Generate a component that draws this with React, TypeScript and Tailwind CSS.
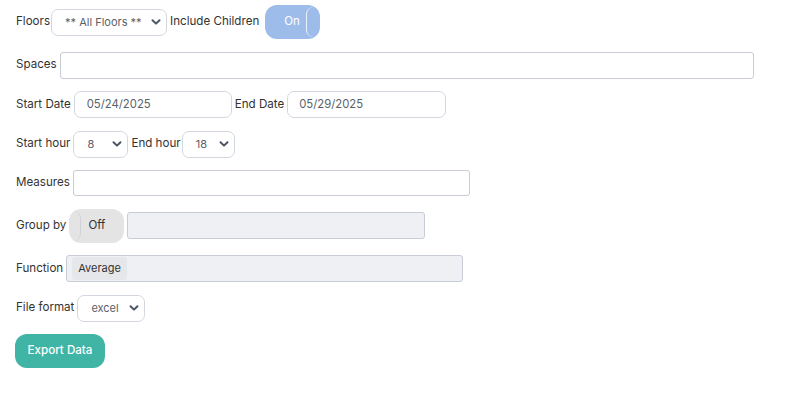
import React from 'react';

const font = { fontFamily: 'Inter, "Open Sans", sans-serif' };

const Chevron: React.FC = () => (
  <svg className="w-[10px] h-[10px] text-gray-600 shrink-0" viewBox="0 0 10 10" fill="none">
    <path d="M1.5 3.2 L5 6.6 L8.5 3.2" stroke="currentColor" strokeWidth="2" strokeLinecap="round" strokeLinejoin="round" />
  </svg>
);

interface SelectProps {
  value: string;
  width: string;
}

const FakeSelect: React.FC<SelectProps> = ({ value, width }) => (
  <div
    className={`${width} h-[27px] flex items-center justify-between pl-[13px] pr-[5px] border border-[#d3d8e0] rounded-[7px] bg-white text-[11px] text-[#5a5f68]`}
  >
    <span className="whitespace-nowrap">{value}</span>
    <Chevron />
  </div>
);

const Toggle: React.FC<{ on: boolean }> = ({ on }) =>
  on ? (
    <div className="relative w-[55px] h-[34px] rounded-[12px] bg-[#9dbce9] flex items-center pl-[19px] text-white text-[11.5px]">
      On
      <span className="absolute right-[4px] top-[2px] w-[10px] h-[30px] rounded-l-[8px] rounded-r-[3px] border-l border-white/80" />
    </div>
  ) : (
    <div className="relative w-[55px] h-[34px] rounded-[12px] bg-[#e4e4e4] flex items-center pl-[19px] text-[#333] text-[11.5px]">
      Off
      <span className="absolute left-[2px] top-[2px] w-[10px] h-[30px] rounded-r-[8px] border-r border-[#cfd3d8]" />
    </div>
  );

const Label: React.FC<{ children: React.ReactNode }> = ({ children }) => (
  <span className="text-[11.6px] text-[#333] whitespace-nowrap">{children}</span>
);

export default function App() {
  return (
    <div style={font} className="w-[787px] h-[398px] bg-white pt-[5px] pl-[16px] flex flex-col gap-[12.5px]">
      <div className="flex items-center gap-[3px]">
        <Label>Floors</Label>
        <div className="ml-[-2px]">
          <FakeSelect value="** All Floors **" width="w-[116px]" />
        </div>
        <Label>Include Children</Label>
        <div className="ml-[3px]">
          <Toggle on={true} />
        </div>
      </div>

      <div className="flex items-center gap-[3px]">
        <Label>Spaces</Label>
        <div className="w-[694px] h-[27px] border border-[#c7ccd6] rounded-[3px] bg-white" />
      </div>

      <div className="flex items-center gap-[3px]">
        <Label>Start Date</Label>
        <div className="w-[158px] h-[27px] border border-[#d3d8e0] rounded-[7px] pl-[12px] flex items-center text-[11.3px] text-[#5a5f68]">
          05/24/2025
        </div>
        <Label>End Date</Label>
        <div className="w-[159px] h-[27px] border border-[#d3d8e0] rounded-[7px] pl-[11px] flex items-center text-[11.3px] text-[#5a5f68]">
          05/29/2025
        </div>
      </div>

      <div className="flex items-center gap-[3px]">
        <Label>Start hour</Label>
        <FakeSelect value="8" width="w-[55px]" />
        <Label>End hour</Label>
        <div className="ml-[-2px]">
          <FakeSelect value="18" width="w-[53px]" />
        </div>
      </div>

      <div className="flex items-center gap-[3px]">
        <Label>Measures</Label>
        <div className="w-[397px] h-[26px] border border-[#c7ccd6] rounded-[3px] bg-white" />
      </div>

      <div className="flex items-center gap-[3px]">
        <Label>Group by</Label>
        <Toggle on={false} />
        <div className="w-[298px] h-[27px] border border-[#c7ccd6] rounded-[3px] bg-[#eef0f4]" />
      </div>

      <div className="flex items-center gap-[3px]">
        <Label>Function</Label>
        <div className="w-[397px] h-[27px] border border-[#c7ccd6] rounded-[3px] bg-[#eef0f4] flex items-center pl-[5px]">
          <span className="px-[6px] py-[3px] rounded-[3px] bg-[#e6e7ea] text-[11px] text-[#333]">Average</span>
        </div>
      </div>

      <div className="flex items-center gap-[3px]">
        <Label>File format</Label>
        <FakeSelect value="excel" width="w-[68px]" />
      </div>

      <div>
        <button className="ml-[-1px] w-[90px] h-[34px] rounded-[12px] bg-[#40b5a6] text-white text-[11.6px] font-medium">
          Export Data
        </button>
      </div>
    </div>
  );
}
